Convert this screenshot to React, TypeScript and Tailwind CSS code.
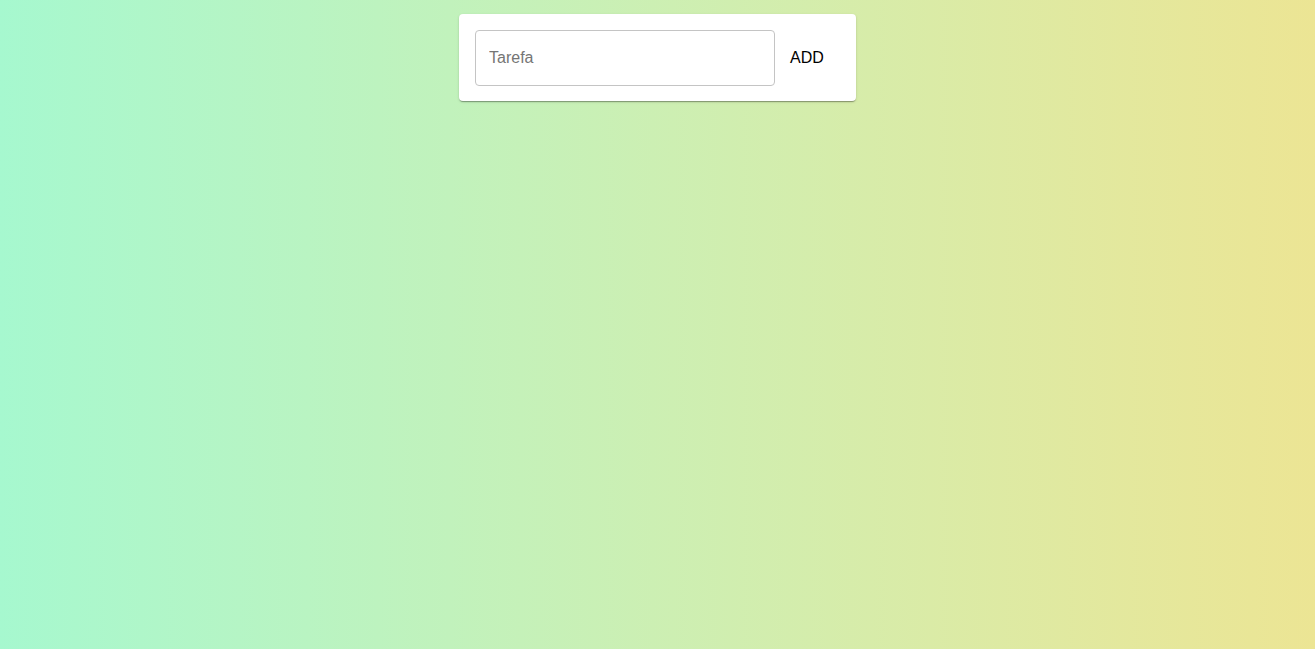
export default function App() {
  return (
    <div className="flex h-[649px] w-full justify-center bg-gradient-to-r from-[#a6f8cf] to-[#ece594] pt-[14px] font-['Liberation_Sans',Arial,sans-serif]">
      <div className="flex h-[87px] w-[397px] items-start rounded-[4px] bg-white p-4 shadow-[0_2px_1px_-1px_rgba(0,0,0,0.2),0_1px_1px_0_rgba(0,0,0,0.14),0_1px_3px_0_rgba(0,0,0,0.12)]">
        <input
          placeholder="Tarefa"
          className="h-[56px] w-[300px] rounded-[4px] border border-[#c4c4c4] px-[13px] text-[16px] text-black outline-none placeholder:text-[#757575]"
        />
        <button className="flex h-[56px] w-[64px] items-center justify-center text-[16px] text-black">
          ADD
        </button>
      </div>
    </div>
  );
}
